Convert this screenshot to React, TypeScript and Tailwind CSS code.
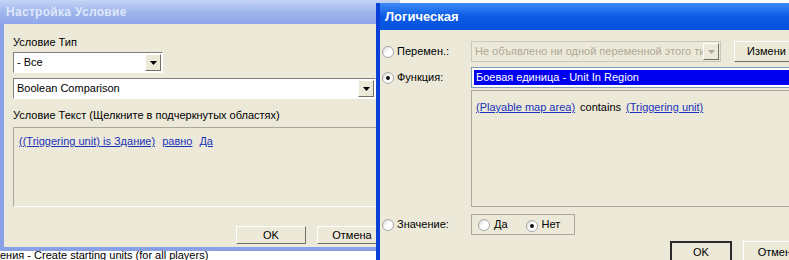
const ui = { fontFamily: "'Liberation Sans', Arial, sans-serif" };

function Radio({ checked = false }: { checked?: boolean }) {
  return (
    <span className="relative inline-flex w-[12px] h-[12px] shrink-0 rounded-full border border-[#a8a8a8] bg-gradient-to-br from-[#d8d8d0] via-white to-white items-center justify-center">
      {checked && <span className="w-[4px] h-[4px] rounded-full bg-[#111]" />}
    </span>
  );
}

function Arrow({ disabled = false }: { disabled?: boolean }) {
  return (
    <span className="w-[16px] h-full shrink-0 flex items-center justify-center bg-[#ece9d8] border border-t-white border-l-white border-b-[#716f64] border-r-[#716f64]">
      <svg width="7" height="4" viewBox="0 0 7 4">
        <path d="M0 0h7L3.5 4z" fill={disabled ? "#aca899" : "#000"} />
      </svg>
    </span>
  );
}

function Select({ text, className }: { text: string; className: string }) {
  return (
    <div className={`flex h-[21px] bg-white border border-t-[#7f7f7f] border-l-[#7f7f7f] border-b-white border-r-white p-[1px] ${className}`}>
      <span className="flex-1 pl-[2px] leading-[17px] truncate">{text}</span>
      <Arrow />
    </div>
  );
}

function Button({ label, def = false, className = "" }: { label: string; def?: boolean; className?: string }) {
  return (
    <div
      className={`flex items-center justify-center bg-[#ece9d8] ${
        def ? "border-2 border-[#2b2b2b]" : "border border-t-white border-l-white border-b-[#716f64] border-r-[#716f64]"
      } ${className}`}
    >
      {label}
    </div>
  );
}

export default function App() {
  return (
    <div style={ui} className="relative w-[789px] h-[260px] overflow-hidden bg-white text-[11px] text-black">
      {/* settings dialog (inactive) */}
      <div className="absolute left-0 top-0 w-[400px] flex flex-col">
        <div className="h-[24px] flex items-center pl-[6px] bg-gradient-to-b from-[#c6d4f6] via-[#9fb5ec] to-[#8ea6e8]">
          <span className="text-[12px] font-bold text-[#dfe8fa] tracking-[0.3px]">Настройка Условие</span>
        </div>
        <div className="h-[223px] bg-[#ece9d8] border-l-4 border-[#8aa0e6] pl-[9px] pt-[12px] flex flex-col">
          <div className="leading-[13px]">Условие Тип</div>
          <Select text="- Все" className="w-[150px] mt-[3px]" />
          <Select text="Boolean Comparison" className="w-[363px] mt-[5px]" />
          <div className="leading-[13px] mt-[10px]">Условие Текст (Щелкните в подчеркнутых областях)</div>
          <div className="w-[380px] h-[80px] mt-[5px] border border-t-[#aca899] border-l-[#aca899] border-b-white border-r-white px-[5px] pt-[5px] flex gap-[7px] text-[#1a33b8]">
            <span className="underline">((Triggering unit) is Здание)</span>
            <span className="underline">равно</span>
            <span className="underline">Да</span>
          </div>
          <div className="flex gap-[11px] mt-[19px] ml-[223px]">
            <Button label="OK" className="w-[70px] h-[18px]" />
            <Button label="Отмена" className="w-[70px] h-[18px]" />
          </div>
        </div>
        <div className="h-[4px] bg-[#8aa0e6]" />
        <div className="h-[9px] overflow-hidden">
          <div className="leading-[11px] -mt-[1px]">ения - Create starting units (for all players)</div>
        </div>
      </div>

      {/* boolean dialog (active) */}
      <div className="absolute left-[376px] top-[3px] w-[430px] h-[270px] flex flex-col border-l-4 border-[#0a3fd8] bg-[#ece9d8]">
        <div className="h-[27px] shrink-0 flex items-center pl-[5px] bg-gradient-to-b from-[#3d8bf7] via-[#0a5ae6] to-[#0653dc]">
          <span className="text-[13px] font-bold text-white">Логическая</span>
        </div>
        <div className="flex-1 pt-[11px] pl-[2px]">
          <div className="grid grid-cols-[89px_1fr] items-center">
            <div className="flex items-center gap-[3px]">
              <Radio />
              <span>Перемен.:</span>
            </div>
            <div className="flex items-center gap-[13px]">
              <div className="flex w-[250px] h-[21px] bg-[#ece9d8] border border-[#c9c7ba] p-[1px]">
                <span className="flex-1 pl-[2px] leading-[17px] text-[#aca899] whitespace-nowrap overflow-hidden">
                  Не объявлено ни одной переменной этого типа
                </span>
                <Arrow disabled />
              </div>
              <Button label="Измени" className="w-[75px] h-[21px] justify-start pl-[12px]" />
            </div>

            <div className="flex items-center gap-[3px] mt-[5px]">
              <Radio checked />
              <span>Функция:</span>
            </div>
            <div className="mt-[5px] h-[21px] bg-white border border-[#7f9db9] p-[2px]">
              <div className="h-full bg-[#0000f0] text-white pl-[2px] leading-[15px]">Боевая единица - Unit In Region</div>
            </div>

            <div />
            <div className="mt-[2px] h-[117px] border border-t-[#aca899] border-l-[#aca899] border-b-[#aca899] border-r-white px-[4px] pt-[8px] flex gap-[5px]">
              <span className="underline text-[#1a33b8]">(Playable map area)</span>
              <span>contains</span>
              <span className="underline text-[#1a33b8]">(Triggering unit)</span>
            </div>

            <div className="flex items-center gap-[3px] mt-[7px]">
              <Radio />
              <span>Значение:</span>
            </div>
            <div className="mt-[7px]">
              <div className="w-[104px] h-[21px] border border-[#aca899] flex items-center pl-[6px]">
                <Radio />
                <span className="ml-[4px]">Да</span>
                <span className="ml-[18px]"><Radio checked /></span>
                <span className="ml-[4px]">Нет</span>
              </div>
            </div>
          </div>
          <div className="flex gap-[11px] mt-[6px] ml-[288px]">
            <Button label="OK" def className="w-[71px] h-[22px]" />
            <Button label="Отмена" className="w-[71px] h-[22px] justify-start pl-[14px]" />
          </div>
        </div>
      </div>
    </div>
  );
}
